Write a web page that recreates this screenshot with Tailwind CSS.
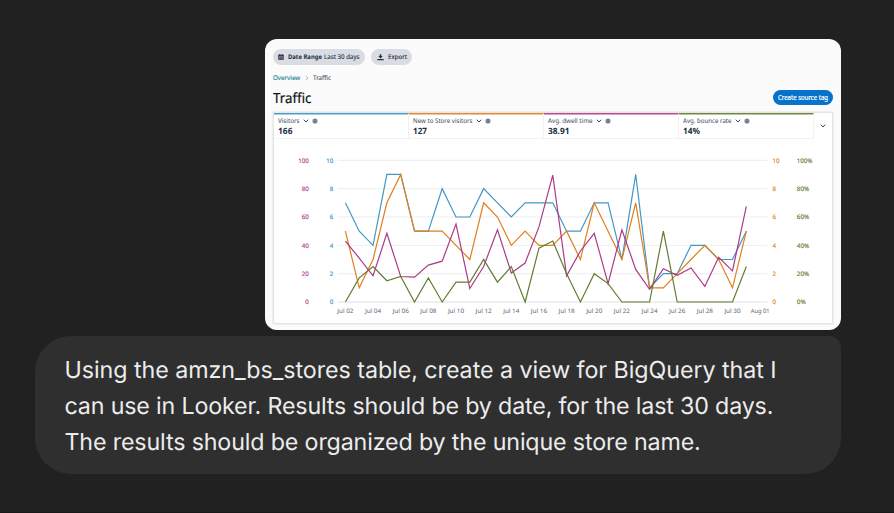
<!DOCTYPE html>
<html lang="en">
<head>
<meta charset="utf-8">
<title>Chat</title>
<script src="https://cdn.jsdelivr.net/npm/@tailwindcss/browser@4"></script>
</head>
<body class="bg-[#212121] w-[894px] h-[513px] overflow-hidden">
<svg class="hidden">
  <symbol id="chev" viewBox="0 0 6 4"><path d="M.8.7 3 3 5.2.7" fill="none" stroke="currentColor" stroke-width=".9"/></symbol>
  <symbol id="info" viewBox="0 0 6 6"><circle cx="3" cy="3" r="2.6" fill="#7f90a6"/><path d="M3 1.2v.8M3 2.6v2.1" stroke="#3f5370" stroke-width=".9"/></symbol>
</svg>
<main class="h-[513px] flex flex-col items-end gap-[6px] pt-[39px] pr-[53px] border-b border-[#171717]">
  <section class="w-[576px] h-[291px] shrink-0 rounded-[12px] bg-[#fbfbfb] overflow-hidden pl-[7.5px] pr-[8px] pt-[10px] flex flex-col text-[#232f3e]" style="font-family:'Noto Sans','Open Sans',sans-serif;text-rendering:geometricPrecision">
    <div class="flex gap-[6px] h-[16px] shrink-0 text-[6px] leading-[16px] whitespace-nowrap">
      <div class="w-[92.5px] rounded-full bg-[#d9dde3] flex items-center pl-[5px]">
        <svg class="w-[6px] h-[6px] mr-[4.5px]" viewBox="0 0 6 6"><path d="M.6 1h4.8v4.5H.6z" fill="#8b939e" stroke="#2f3b4a" stroke-width=".8"/><path d="M.5 1.5h5M1.7 0v1.5M4.3 0v1.5M1.5 3h3M1.5 4.3h3" stroke="#2f3b4a" stroke-width=".8"/></svg>
        <svg class="w-[74px] h-[16px]" viewBox="0 0 74 16" fill="#232f3e"><text x="0" y="10.1" textLength="34" lengthAdjust="spacingAndGlyphs" font-size="6.4" font-weight="700">Date Range</text><text x="36" y="10.1" textLength="35.5" lengthAdjust="spacingAndGlyphs" font-size="6.4" stroke="#232f3e" stroke-width=".1">Last 30 days</text></svg>
      </div>
      <div class="w-[41px] rounded-full bg-[#d9dde3] flex items-center pl-[5.5px]">
        <svg class="w-[7px] h-[7px] mr-[4px]" viewBox="0 0 7 7"><path d="M3.5.2v2.6" stroke="#232f3e" stroke-width="1.5"/><path d="M1.3 2.1h4.4L3.5 4.6z" fill="#232f3e"/><path d="M.3 5.7h6.4" fill="none" stroke="#232f3e" stroke-width="1.2"/></svg>
        <svg class="w-[22px] h-[16px]" viewBox="0 0 22 16"><text x="0" y="10.1" textLength="19" lengthAdjust="spacingAndGlyphs" font-size="6.4" fill="#232f3e" stroke="#232f3e" stroke-width=".12">Export</text></svg>
      </div>
    </div>
    <nav class="h-[10px] mt-[8px] shrink-0">
      <svg class="w-[62px] h-[10px]" viewBox="0 0 62 10" font-size="6.4"><text x="0" y="7.2" textLength="27.2" lengthAdjust="spacingAndGlyphs" fill="#1b7f91" stroke="#1b7f91" stroke-width=".12">Overview</text><path d="M32.8 3l2 2-2 2" fill="none" stroke="#8a949f" stroke-width=".7"/><text x="40" y="7.2" textLength="18" lengthAdjust="spacingAndGlyphs" fill="#4c5560" stroke="#4c5560" stroke-width=".1">Traffic</text></svg>
    </nav>
    <div class="flex justify-between items-center h-[18px] mt-[6px] shrink-0">
      <svg class="w-[50px] h-[18px]" viewBox="0 0 50 18"><text x="0" y="13.8" textLength="38.5" lengthAdjust="spacingAndGlyphs" font-size="14" fill="#0f1111" stroke="#0f1111" stroke-width=".2">Traffic</text></svg>
      <button class="w-[60.5px] h-[15.5px] rounded-full bg-[#0573cc] mt-[-1px] flex items-center justify-center">
        <svg class="w-[54px] h-[15px]" viewBox="0 0 54 15"><text x="2" y="9.6" textLength="50" lengthAdjust="spacingAndGlyphs" font-size="6.5" fill="#fff" stroke="#fff" stroke-width=".2">Create source tag</text></svg>
      </button>
    </div>
    <div class="mt-[5px] w-[560px] h-[212px] shrink-0 bg-white border border-[#e3e5e6] shadow-[0_0_1.5px_#c8cccf] flex flex-col">
      <div class="flex h-[26px] shrink-0 leading-none">
        <div class="w-[135px] border-t border-t-[#4a9fc9] shadow-[inset_0_1px_0_#a4cfe4] border-r border-r-[#f1f2f3] border-b border-b-[#f1f2f3] pl-[4px] pt-[2.5px]">
          <div class="flex items-center h-[8px]"><svg class="w-[24px] h-[8px] mr-[1px]" viewBox="0 0 24 8"><text y="6.2" textLength="21.5" lengthAdjust="spacingAndGlyphs" font-size="6.5" fill="#3a4656">Visitors</text></svg><svg class="w-[6px] h-[4px] mr-[3px]"><use href="#chev"/></svg><svg class="w-[6px] h-[6px]"><use href="#info"/></svg></div>
          <svg class="w-[40px] h-[11px]" viewBox="0 0 40 11"><text y="8.9" textLength="14.5" lengthAdjust="spacingAndGlyphs" font-size="8.6" font-weight="700" fill="#232f3e">166</text></svg>
        </div>
        <div class="w-[135px] border-t border-t-[#e68a2e] shadow-[inset_0_1px_0_#f2c496] border-r border-r-[#f1f2f3] border-b border-b-[#f1f2f3] pl-[4px] pt-[2.5px]">
          <div class="flex items-center h-[8px]"><svg class="w-[62px] h-[8px] mr-[1px]" viewBox="0 0 62 8"><text y="6.2" textLength="59.5" lengthAdjust="spacingAndGlyphs" font-size="6.5" fill="#3a4656">New to Store visitors</text></svg><svg class="w-[6px] h-[4px] mr-[3px]"><use href="#chev"/></svg><svg class="w-[6px] h-[6px]"><use href="#info"/></svg></div>
          <svg class="w-[40px] h-[11px]" viewBox="0 0 40 11"><text y="8.9" textLength="14" lengthAdjust="spacingAndGlyphs" font-size="8.6" font-weight="700" fill="#232f3e">127</text></svg>
        </div>
        <div class="w-[135px] border-t border-t-[#b84a92] shadow-[inset_0_1px_0_#dba4c8] border-r border-r-[#f1f2f3] border-b border-b-[#f1f2f3] pl-[4px] pt-[2.5px]">
          <div class="flex items-center h-[8px]"><svg class="w-[47px] h-[8px] mr-[1px]" viewBox="0 0 47 8"><text y="6.2" textLength="44.5" lengthAdjust="spacingAndGlyphs" font-size="6.5" fill="#3a4656">Avg. dwell time</text></svg><svg class="w-[6px] h-[4px] mr-[3px]"><use href="#chev"/></svg><svg class="w-[6px] h-[6px]"><use href="#info"/></svg></div>
          <svg class="w-[40px] h-[11px]" viewBox="0 0 40 11"><text y="8.9" textLength="21.5" lengthAdjust="spacingAndGlyphs" font-size="8.6" font-weight="700" fill="#232f3e">38.91</text></svg>
        </div>
        <div class="w-[135px] border-t border-t-[#6f8a3f] shadow-[inset_0_1px_0_#b7c49f] border-r border-r-[#f1f2f3] border-b border-b-[#f1f2f3] pl-[4px] pt-[2.5px]">
          <div class="flex items-center h-[8px]"><svg class="w-[51px] h-[8px] mr-[1px]" viewBox="0 0 51 8"><text y="6.2" textLength="48.5" lengthAdjust="spacingAndGlyphs" font-size="6.5" fill="#3a4656">Avg. bounce rate</text></svg><svg class="w-[6px] h-[4px] mr-[3px]"><use href="#chev"/></svg><svg class="w-[6px] h-[6px]"><use href="#info"/></svg></div>
          <svg class="w-[40px] h-[11px]" viewBox="0 0 40 11"><text y="8.9" textLength="17" lengthAdjust="spacingAndGlyphs" font-size="8.6" font-weight="700" fill="#232f3e">14%</text></svg>
        </div>
        <div class="flex-1 flex items-center justify-center"><svg class="w-[6px] h-[4px] mr-[-1px]"><use href="#chev"/></svg></div>
      </div>
      <svg id="chart" class="w-[558px] h-[183px] shrink-0" viewBox="274 139 558 183" font-size="6.1"></svg>
    </div>
  </section>
  <section class="w-[806px] h-[138px] shrink-0 rounded-[36px] rounded-tr-[12px] bg-[#2f2f2f] pl-[29.5px] pt-[16px] text-[#ececec] text-[23.25px] leading-[36px] whitespace-nowrap" style="font-family:Inter,sans-serif;text-rendering:geometricPrecision">
    <p class="tracking-[-0.05px]">Using the amzn_bs_stores table, create a view for BigQuery that I</p>
    <p class="tracking-[-0.17px]">can use in Looker. Results should be by date, for the last 30 days.</p>
    <p class="tracking-[-0.15px]">The results should be organized by the unique store name.</p>
  </section>
</main>
<script>
const X0 = 345.4, STEP = 13.825, Y0 = 302, UNIT = 14.17;
const series = [
  ['#4297c3', [7,5,4,9,9,5,5,8,6,6,8,7,6,7,7,7,5,5,7,7,3,9,1,2,2,4,4,3,3,5]],
  ['#e07f1c', [5,1,3,7,9,5,5,5,4,3,7,6,4,5,4,4,5,3,7,5,3,7,1,1,2,3,4,3,1,5]],
  ['#ac3a86', [4.3,3.1,1.85,4.85,1.8,1.75,2.6,2.88,5.5,.95,2.5,5.1,2.05,2.75,5.3,8.95,1.85,3.6,4.85,1.3,5.1,2.3,.9,2.35,1.88,2.4,1.1,3.15,2.2,6.75]],
  ['#627c30', [0,1.7,2.5,1.5,1.8,0,1.7,0,1.4,1.4,3,1.4,2.5,0,3.8,4.3,2,0,2,1.3,0,0,0,5,0,0,0,0,0,2.5]]
];
let out = '';
for (let v = 0; v <= 10; v += 2) {
  const y = Y0 - v * UNIT, t = y + 2.2;
  out += `<path d="M337.5 ${y}H767.5" stroke="${v ? '#e9ebed' : '#dfe1e4'}" stroke-width="${v ? .9 : 1.2}"/>`;
  out += `<g stroke-width=".15"><text x="308.7" y="${t}" text-anchor="end" fill="#b0428c" stroke="#b0428c">${v * 10}</text>`;
  out += `<text x="333.2" y="${t}" text-anchor="end" fill="#3b93bf" stroke="#3b93bf">${v}</text>`;
  out += `<text x="772.5" y="${t}" fill="#e0862a" stroke="#e0862a">${v}</text>`;
  out += `<text x="796.8" y="${t}" fill="#688035" stroke="#688035" textLength="${v === 10 ? 15.7 : v ? 12.4 : 9}" lengthAdjust="spacingAndGlyphs">${v * 10}%</text></g>`;
}
for (const [color, data] of series) {
  out += `<polyline fill="none" stroke="${color}" stroke-width="1.2" points="${data.map((v, i) => (X0 + i * STEP) + ',' + (Y0 - v * UNIT)).join(' ')}"/>`;
}
for (let i = 0; i <= 15; i++) {
  const label = i === 15 ? 'Aug 01' : 'Jul ' + String(2 + i * 2).padStart(2, '0');
  const w = i === 15 ? 18.7 : 16.2;
  out += `<text x="${X0 + i * 2 * STEP}" y="312.6" text-anchor="middle" textLength="${w}" lengthAdjust="spacingAndGlyphs" fill="#5b6778">${label}</text>`;
}
document.getElementById('chart').innerHTML = out;
</script>
</body>
</html>
